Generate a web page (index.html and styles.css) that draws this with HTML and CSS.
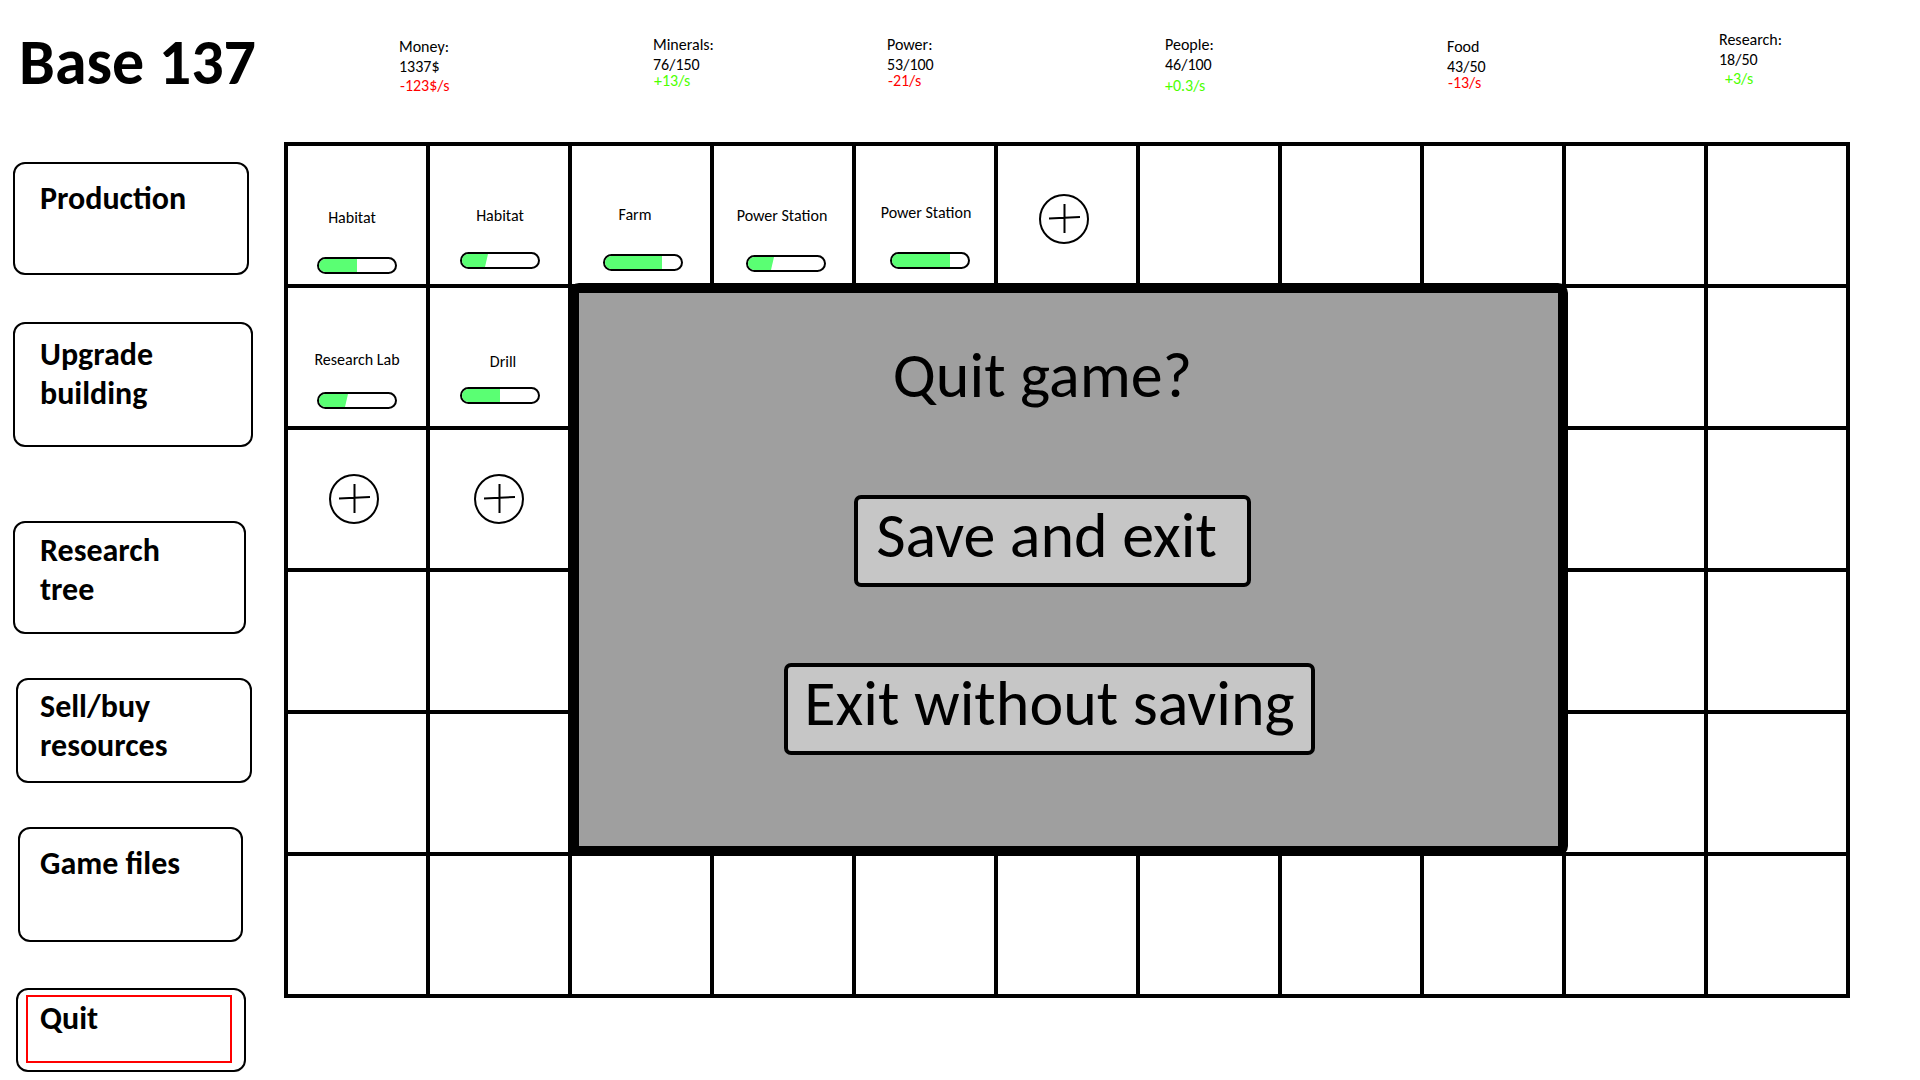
FILE: index.html
```html
<!DOCTYPE html>
<html lang="en">
<head>
<meta charset="utf-8">
<title>Base 137</title>
<link rel="stylesheet" href="styles.css">
</head>
<body>
<header class="topbar">
  <h1 class="title">Base 137</h1>
  <ul class="stats">
    <li class="stat stat-low"><span>Money:</span><span>1337$</span><span class="rate rate-down">-123$/s</span></li>
    <li class="stat stat-mid rate-tight"><span>Minerals:</span><span>76/150</span><span class="rate rate-up">+13/s</span></li>
    <li class="stat stat-mid rate-tight"><span>Power:</span><span>53/100</span><span class="rate rate-down">-21/s</span></li>
    <li class="stat stat-mid rate-loose"><span>People:</span><span>46/100</span><span class="rate rate-up">+0.3/s</span></li>
    <li class="stat stat-low rate-tight"><span>Food</span><span>43/50</span><span class="rate rate-down">-13/s</span></li>
    <li class="stat"><span>Research:</span><span>18/50</span><span class="rate rate-up rate-indent">+3/s</span></li>
  </ul>
</header>
<div class="layout">
  <nav class="menu" aria-label="Base menu">
    <button class="menu-item production" type="button">Production</button>
    <button class="menu-item upgrade" type="button">Upgrade<br>building</button>
    <button class="menu-item research" type="button">Research<br>tree</button>
    <button class="menu-item trade" type="button">Sell/buy<br>resources</button>
    <button class="menu-item files" type="button">Game files</button>
    <button class="menu-item quit" type="button"><span class="selection">Quit</span></button>
  </nav>
  <main class="board">
    <div class="cell habitat-a"><span class="name">Habitat</span><div class="bar"><div class="fill" style="width:38px"></div></div></div>
    <div class="cell habitat-b"><span class="name">Habitat</span><div class="bar"><div class="fill slanted" style="width:26px"></div></div></div>
    <div class="cell farm"><span class="name">Farm</span><div class="bar"><div class="fill" style="width:57px"></div></div></div>
    <div class="cell station-a"><span class="name">Power Station</span><div class="bar"><div class="fill slanted" style="width:26px"></div></div></div>
    <div class="cell station-b"><span class="name">Power Station</span><div class="bar"><div class="fill" style="width:58px"></div></div></div>
    <div class="cell vacant vacant-top"><button class="add" type="button" aria-label="Build here"><svg viewBox="0 0 50 50"><circle cx="25" cy="25" r="24"/><path d="M25.500 10V39M10 24.500L41 23"/></svg></button></div>
    <div class="cell"></div><div class="cell"></div><div class="cell"></div><div class="cell"></div><div class="cell"></div>

    <div class="cell lab"><span class="name">Research Lab</span><div class="bar"><div class="fill slanted" style="width:29px"></div></div></div>
    <div class="cell drill"><span class="name">Drill</span><div class="bar"><div class="fill" style="width:38px"></div></div></div>
    <div class="cell"></div><div class="cell"></div>

    <div class="cell vacant vacant-left"><button class="add" type="button" aria-label="Build here"><svg viewBox="0 0 50 50"><circle cx="25" cy="25" r="24"/><path d="M25.500 10V39M10 24.500L41 23"/></svg></button></div>
    <div class="cell vacant"><button class="add" type="button" aria-label="Build here"><svg viewBox="0 0 50 50"><circle cx="25" cy="25" r="24"/><path d="M25.500 10V39M10 24.500L41 23"/></svg></button></div>
    <div class="cell"></div><div class="cell"></div>

    <div class="cell"></div><div class="cell"></div><div class="cell"></div><div class="cell"></div>
    <div class="cell"></div><div class="cell"></div><div class="cell"></div><div class="cell"></div>

    <div class="cell"></div><div class="cell"></div><div class="cell"></div><div class="cell"></div><div class="cell"></div><div class="cell"></div>
    <div class="cell"></div><div class="cell"></div><div class="cell"></div><div class="cell"></div><div class="cell"></div>

    <section class="dialog" role="dialog" aria-labelledby="quit-title">
      <h2 class="dialog-title" id="quit-title">Quit game?</h2>
      <button class="choice choice-save" type="button">Save and exit</button>
      <button class="choice" type="button">Exit without saving</button>
    </section>
  </main>
</div>
</body>
</html>
```
FILE: styles.css
```css
* { box-sizing: border-box; }

body {
  margin: 0;
  background: #fff;
  color: #000;
  font: 16px/20px Calibri, Carlito, Lato, sans-serif;
}

button {
  font: inherit;
  color: inherit;
  cursor: pointer;
}

/* Top bar */
.topbar {
  display: flex;
  height: 142px;
}

.title {
  flex: none;
  width: 399px;
  margin: 0;
  padding: 23px 0 0 19px;
  font-size: 64px;
  line-height: 78px;
}

.stats {
  flex: 1;
  display: grid;
  grid-template-columns: 254fr 234fr 278fr 282fr 272fr 201fr;
  align-items: start;
  margin: 0;
  padding: 30px 0 0;
  list-style: none;
}

.stat {
  display: flex;
  flex-direction: column;
}

.stat-mid { padding-top: 5px; }
.stat-low { padding-top: 7px; }

.rate { margin: -1px 0 0 1px; }
.rate-tight .rate { margin-top: -4px; }
.rate-loose .rate { margin: 1px 0 0; }
.rate-indent { margin-left: 6px; }
.rate-up { color: #4dff00; }
.rate-down { color: #ff0000; }

/* Side menu */
.layout { display: flex; align-items: flex-start; }

.menu {
  flex: none;
  display: flex;
  flex-direction: column;
  align-items: flex-start;
  gap: 44px;
  width: 284px;
  padding: 20px 0 8px 13px;
}

.menu-item {
  display: flex;
  width: 236px;
  height: 113px;
  padding: 15px 0 0 25px;
  border: 2px solid #000;
  border-radius: 12px;
  background: #fff;
  font-size: 32px;
  font-weight: 700;
  line-height: 39px;
  text-align: left;
}

.upgrade { width: 240px; height: 125px; margin: 3px 0 30px; padding-top: 11px; }
.research { width: 233px; padding-top: 8px; }
.trade { height: 105px; margin-left: 3px; padding: 7px 0 0 22px; }
.files { width: 225px; height: 115px; margin-left: 5px; padding-left: 20px; }
.quit { width: 230px; height: 84px; margin: 2px 0 0 3px; padding: 5px 12px 7px 8px; }

.selection {
  flex: 1;
  align-self: stretch;
  padding: 2px 0 0 12px;
  border: 2px solid #ff0000;
}

/* Building board */
.board {
  flex: 1;
  min-width: 0;
  display: grid;
  grid-template-columns: repeat(11, minmax(0, 1fr));
  gap: 4px;
  margin-right: 70px;
  padding: 4px;
  background: #000;
}

.cell {
  display: flex;
  flex-direction: column;
  align-items: center;
  justify-content: flex-end;
  gap: 29px;
  aspect-ratio: 1;
  background: #fff;
}

.habitat-a { padding-bottom: 10px; }
.habitat-b { padding: 0 0 15px 2px; gap: 26px; }
.farm { padding: 0 0 13px 4px; }
.station-a { padding: 0 0 12px 6px; }
.station-b { padding: 0 0 15px 10px; }
.lab { padding-bottom: 17px; gap: 22px; }
.drill { padding: 0 0 22px 2px; gap: 15px; }
.vacant { justify-content: center; }
.vacant-top { padding: 8px 6px 0 0; }
.vacant-left { padding-right: 6px; }

.habitat-a .name { padding-right: 10px; }
.station-a .name,
.station-b .name { padding-right: 8px; }
.farm .name { padding-right: 16px; }
.drill .name { padding-left: 6px; }

.bar {
  width: 80px;
  height: 17px;
  border: 2px solid #000;
  border-radius: 9px;
  overflow: hidden;
}

.fill {
  height: 100%;
  background: #5aff73;
}

.slanted { clip-path: polygon(0 0, 100% 0, calc(100% - 3px) 100%, 0 100%); }

.add {
  width: 50px;
  height: 50px;
  padding: 0;
  border: 0;
  background: none;
}

.add svg {
  display: block;
  fill: none;
  stroke: #000;
  stroke-width: 2;
}

/* Quit dialog, laid over the middle of the board */
.dialog {
  grid-column: 3 / 10;
  grid-row: 2 / 6;
  display: flex;
  flex-direction: column;
  align-items: center;
  margin: -5px -6px -4px -3px;
  padding: 43px 38px 0 0;
  border: 10px solid #000;
  border-radius: 10px;
  background: #9f9f9f;
  font-size: 64px;
  line-height: 78px;
}

.dialog-title {
  margin: 0 14px 81px 0;
  font-size: 64px;
  font-weight: 400;
}

.choice {
  padding: 0 16px 12px;
  border: 4px solid #000;
  border-radius: 7px;
  background: #c6c6c6;
  line-height: 72px;
}

.choice-save {
  margin: 0 0 76px 6px;
  padding: 0 30px 12px 18px;
}
```
